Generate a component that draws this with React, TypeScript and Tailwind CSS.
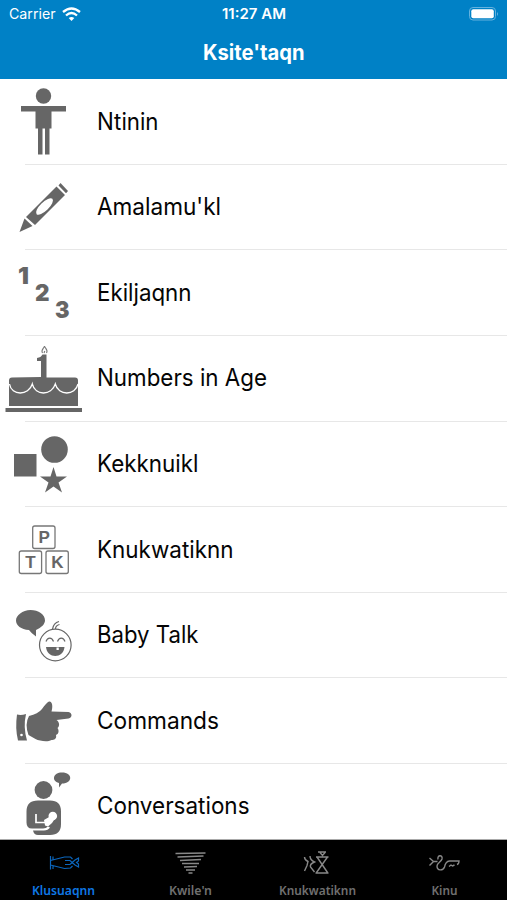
import type { ReactNode } from "react";

interface Category {
  label: string;
  width: string;
  icon: ReactNode;
}

// Every row icon is drawn on an 88x85 canvas that fills the left part of its row.
const categories: Category[] = [
  {
    label: "Ntinin",
    width: "61.5",
    icon: (
      <>
        <circle cx="43.500" cy="17" r="7.700" />
        <path d="M21 27h45v5.500H51.500V49.500H49.500V75.500H45V49.500H42.500V75.500H38V49.500H35.500V32.500H21z" />
      </>
    ),
  },
  {
    label: "Amalamu'kl",
    width: "124",
    icon: (
      <>
        <path d="M58.500 20.500l2-2.500 7.500 8-2 2.200zM56.500 21.500l8.500 8.500L35 60 26 52zM24.500 53.500l8 7.500-13 6z" />
        <ellipse cx="44.500" cy="41.500" rx="11" ry="4.300" transform="rotate(-44 44.500 41.500)" fill="white" />
      </>
    ),
  },
  {
    label: "Ekiljaqnn",
    width: "94.5",
    icon: (
      <g className="font-['Inter',sans-serif] text-[23px] font-black">
        <text x="18" y="34" textLength="11" lengthAdjust="spacingAndGlyphs">1</text>
        <text x="35" y="51" textLength="14.500" lengthAdjust="spacingAndGlyphs">2</text>
        <text x="55" y="68" textLength="14.500" lengthAdjust="spacingAndGlyphs">3</text>
      </g>
    ),
  },
  {
    label: "Numbers in Age",
    width: "170",
    icon: (
      <>
        <path d="M41 41V25h-4v-3q4-.5 5.500-3.500h4V41.500H75q3 0 3 3V70H9V44.500q0-3 3-3zM5.500 72H82V76H5.500z" />
        <path d="M9.500 48c2 12 19 12 22.800 0 3 12 19 12 23 0 3 12 20 12 22.700 0" fill="none" stroke="white" strokeWidth="1.300" />
        <path d="M42.500 17c-2-3 1.500-4.500 2-7 .5 2.500 4 4 2 7M44 17l.8-2" fill="none" stroke="#777" strokeWidth="1.100" />
      </>
    ),
  },
  {
    label: "Kekknuikl",
    width: "101.5",
    icon: (
      <>
        <path d="M14 33h22.500v22.500H14zM53.500 46l3 9.500h10.500l-8.500 6 3.500 10-8.500-6-8.500 6 3.500-10-8.500-6h10.500z" />
        <circle cx="54.500" cy="28.500" r="13.300" />
      </>
    ),
  },
  {
    label: "Knukwatiknn",
    width: "136.5",
    icon: (
      <>
        <g fill="none" stroke="#777" strokeWidth="1.300">
          <rect x="32.700" y="19" width="22.300" height="22.500" rx="2" />
          <rect x="19.300" y="44" width="22.300" height="22.500" rx="2" />
          <rect x="46" y="44" width="22.300" height="22.500" rx="2" />
        </g>
        <g className="font-['Liberation_Sans',sans-serif] text-[17px] font-bold">
          <text x="38.500" y="36.300">P</text>
          <text x="25.200" y="61.300">T</text>
          <text x="51.200" y="61.300">K</text>
        </g>
      </>
    ),
  },
  {
    label: "Baby Talk",
    width: "101.5",
    icon: (
      <>
        <path d="M30.500 17c8 0 14.500 4.500 14.500 10.500 0 3.500-3.500 7-9 9.500v6.500q-4.500-3-7-6.500C21 36.500 16 32.500 16 27.500S22.500 17 30.500 17z" />
        <g fill="none" stroke="#666" strokeWidth="1.200">
          <circle cx="55.300" cy="52" r="15.800" />
          <path d="M46 48.500c1.500-4.500 6-4.500 7.500 0M57.500 48.500c1.500-4.500 6-4.500 7.500 0M52.500 36q1-6 6.500-7.500M55.500 36q0-3.500 4-4.500" />
        </g>
        <path d="M46 54h18.500c-1 12-17.500 12-18.500 0z" />
        <path d="M56.500 54.500h2.300v2.500h-2.300z" fill="white" />
      </>
    ),
  },
  {
    label: "Commands",
    width: "122",
    icon: (
      <>
        <path d="M17 36.500q4 1 9-.5-3 13 1 26.500H18q-3-12-1-26z" />
        <path d="M29 38q9-2 13-7 4-6 7-7.500c3.500-.5 4 5 2.500 10l17 .5c4 .5 4 6 0 6.500l-12 1.500c3 2 3.500 6 1 8 2 3 1 6-1.500 7 1 4-2 5-4.500 5-4 2.500-12 1-16-1l-7-4q-4-11 .5-19z" />
        <circle cx="21.500" cy="57" r="1.300" fill="white" />
      </>
    ),
  },
  {
    label: "Conversations",
    width: "152.5",
    icon: (
      <>
        <circle cx="43.500" cy="26" r="8.900" />
        <path d="M62 8.500c11 0 11 11 0 11l-3 4v-4.500c-8-2-6-10.500 3-10.500z" />
        <path d="M38 36.500h12q11 0 11 11V60q0 11-11 11H38q-4 0-5-4.500h11q4 0 6-3l-2-1q-2 2-5 2H32q-5.500 0-5.500-6V47.500q0-11 11.500-11z" />
        <path d="M36 50v8.500h9" fill="none" stroke="white" strokeWidth="1.700" />
        <path d="M44 56l6-3.500 5 2-3 4.500-4 3.500-3-1z" fill="white" />
        <circle cx="52.800" cy="52" r="4.300" fill="white" />
      </>
    ),
  },
];

const tabs = [
  {
    label: "Klusuaqnn",
    width: "63",
    icon: (
      <path
        strokeWidth="1.200"
        className="text-[#0b66bd]"
        d="M18.500 8v13.500M18.500 12.500l4-1 10-2.500h6l2 2M18.500 17l4 1 10 2.500 6-.5 2-2M21 11.500v-3M21 18v3M33 12.500h5l5 4.500 3.500 2v-3l-2-1.500 2-1.500v-3L43 12l-5 4.500h-5"
      />
    ),
  },
  {
    label: "Kwile'n",
    width: "43",
    icon: <path strokeWidth="1.600" className="text-[#888]" d="M16.500 5.500l30-.5M18.500 9l26-1M21 12.500l21-1M23 15.500h17M25 19l13-.5M27 22h9M29.500 25h4" />,
  },
  {
    label: "Knukwatiknn",
    width: "77",
    icon: (
      <path
        strokeWidth="1.400"
        className="text-[#888]"
        d="M18.500 9q0 3 3.500 4.500l-1 4-2.500 5.500M24 8q0 4 4.500 6-5 2-4 5l4 5M30 9h12.500M31 9l10.500 15.500M41.500 9L30.500 24.500M29.500 25h13M32 4h8M34 4.500l2.500 3 2.500-3"
      />
    ),
  },
  {
    label: "Kinu",
    width: "26",
    icon: (
      <path
        strokeWidth="1.400"
        className="text-[#888]"
        d="M16.500 10l4 3.500-4 4M20.500 13.500h4M25 11.500c-1-5 5-5 4-.5-1 3-5 4-5 7 0 5 6 5 7.500 1q1-5.500 5-6h9.500q0 3-2 3.500M36 18.500l2-1.500 1.500 1 2-1"
      />
    ),
  },
];

function StatusBar() {
  return (
    <div className="relative flex h-7 items-center justify-between pr-2 pl-[9px] text-[14px] text-white">
      <div className="flex items-center gap-1.5">
        <svg width="47" height="18" fill="white">
          <text x="0" y="14" textLength="46.500" lengthAdjust="spacingAndGlyphs">Carrier</text>
        </svg>
        <svg width="19" height="15" viewBox="0 0 19 15" fill="none" stroke="white" strokeWidth="2.300">
          <path d="M1 5Q9.500-2 18 5M4 8.500q5.500-5 11 0" />
          <path d="M6.700 11q2.800-2 5.600 0l-2.800 3z" fill="white" stroke="none" />
        </svg>
      </div>
      <svg width="66" height="18" className="absolute left-[222px] font-semibold" fill="white">
        <text x="0" y="14" textLength="64" lengthAdjust="spacingAndGlyphs">11:27 AM</text>
      </svg>
      <svg width="30" height="14" viewBox="0 0 30 14">
        <rect x=".5" y=".5" width="26" height="12.500" rx="3.500" fill="none" stroke="#65b2de" />
        <rect x="2.300" y="2.300" width="22.500" height="9" rx="2" fill="white" />
        <path d="M28 5q2 2 0 4z" fill="#65b2de" />
      </svg>
    </div>
  );
}

function CategoryRow({ label, width, icon }: Category) {
  return (
    <div className="flex h-[84.6px] items-center">
      <svg width="88" height="85" viewBox="0 0 88 85" className="shrink-0" fill="#666">
        {icon}
      </svg>
      <svg width="190" height="40" className="ml-[9px] text-[24px]" fill="#050505">
        <text x="0" y="28" textLength={width} lengthAdjust="spacingAndGlyphs">{label}</text>
      </svg>
    </div>
  );
}

export default function App() {
  return (
    <div className="flex h-[900px] w-[507px] flex-col overflow-hidden bg-white font-['Inter',sans-serif]">
      <header className="h-[79px] shrink-0 bg-[#0081c6]">
        <StatusBar />
        <h1 className="flex justify-center pt-2">
          <svg width="120" height="36" className="text-[21px] font-bold" fill="white">
            <text x="9" y="24" textLength="101.500" lengthAdjust="spacingAndGlyphs">Ksite'taqn</text>
          </svg>
        </h1>
      </header>
      <main className="min-h-0 flex-1 overflow-hidden">
        <ul className="pt-[0.3px]">
          {categories.map((category) => (
            <li key={category.label}>
              <CategoryRow {...category} />
              <div className="ml-[25px] h-px bg-[#e7e7e7]" />
            </li>
          ))}
        </ul>
      </main>
      <nav className="grid h-[61px] shrink-0 grid-cols-4 border-t border-[#aaa] bg-black pt-2">
        {tabs.map((tab, index) => (
          <button key={tab.label} className={index === 0 ? "flex flex-col items-center text-[#0f78e6]" : "flex flex-col items-center text-[#707070]"}>
            <svg width="62" height="29" viewBox="0 0 62 29" fill="none">
              <g stroke="currentColor" strokeWidth="1.100">{tab.icon}</g>
            </svg>
            <svg width="90" height="22" className="font-['Noto_Sans',sans-serif] text-[12px] font-semibold" fill="currentColor">
              <text x="45.500" y="18" textAnchor="middle" textLength={tab.width} lengthAdjust="spacingAndGlyphs">{tab.label}</text>
            </svg>
          </button>
        ))}
      </nav>
    </div>
  );
}
